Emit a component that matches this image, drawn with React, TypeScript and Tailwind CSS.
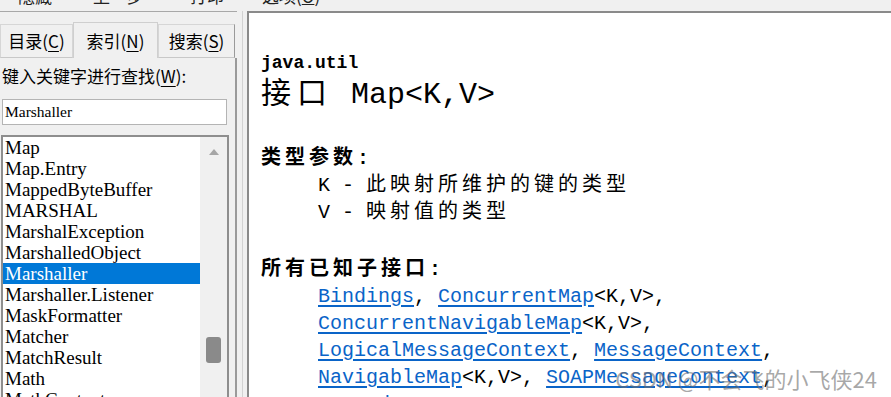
const items = [
  "Map",
  "Map.Entry",
  "MappedByteBuffer",
  "MARSHAL",
  "MarshalException",
  "MarshalledObject",
  "Marshaller",
  "Marshaller.Listener",
  "MaskFormatter",
  "Matcher",
  "MatchResult",
  "Math",
  "MathContext",
];

function Tab({ label, mn, active, className }: { label: string; mn: string; active?: boolean; className: string }) {
  return (
    <div
      className={
        "shrink-0 flex items-center justify-center bg-[#f0f0f0] border-t border-l border-r text-[17px] leading-[24px] " +
        (active ? "h-[36px] border-[#cfcfcf] " : "h-[34px] border-[#d6d6d6] border-b border-b-[#c8c8c8] ") +
        className
      }
    >
      {label}(<span className="underline underline-offset-[3px]">{mn}</span>)
    </div>
  );
}

function Link({ children }: { children: React.ReactNode }) {
  return <span className="text-[#0a64c8] underline underline-offset-[3px] decoration-[#0a64c8]">{children}</span>;
}

export default function App() {
  return (
    <div className="h-[397px] w-[891px] overflow-hidden bg-[#f0f0f0] flex flex-col font-['Noto_Sans_CJK_SC',sans-serif] text-black">
      {/* toolbar, cut off at top */}
      <div className="h-[11px] overflow-hidden flex text-[17px] leading-[17px] text-[#222]">
        <span className="ml-[18px] -mt-[13px]">隐藏</span>
        <span className="ml-[41px] -mt-[13px]">上一步</span>
        <span className="ml-[46px] -mt-[13px]">打印</span>
        <span className="ml-[38px] -mt-[13px]">
          选项(<span className="underline">O</span>)
        </span>
      </div>

      <div className="flex flex-1 min-h-0">
        {/* left pane */}
        <div className="w-[237px] flex flex-col border-t border-[#a8a8a8]">
          <div className="h-[46px] flex items-end">
            <Tab label="目录" mn="C" className="w-[73px]" />
            <Tab label="索引" mn="N" active className="w-[85px]" />
            <Tab label="搜索" mn="S" className="w-[77px] border-r-[#9a9a9a]" />
            <div className="flex-1 h-full" />
          </div>
          <div className="flex-1 flex flex-col border-r-2 border-[#9a9a9a] min-h-0">
            <div className="mt-[6px] ml-[2px] text-[17px] leading-[24px] whitespace-nowrap">
              键入关键字进行查找(<span className="underline underline-offset-[3px]">W</span>):
            </div>
            <div className="mt-[11px] ml-[2px] w-[225px] h-[26px] bg-white border border-[#b4b4b4] flex items-center pl-[2px] font-['Liberation_Serif',serif] text-[15.5px]">
              Marshaller
            </div>
            <div className="mt-[10px] ml-[1px] w-[228px] flex-1 border-2 border-b-0 border-[#8e8e8e] flex min-h-0">
              <div className="w-[197px] bg-white font-['Liberation_Serif',serif] text-[19px] leading-[21px]">
                {items.map((it) => (
                  <div
                    key={it}
                    className={
                      "h-[21px] pl-[2px] whitespace-nowrap " + (it === "Marshaller" ? "bg-[#0078d7] text-white" : "")
                    }
                  >
                    {it}
                  </div>
                ))}
              </div>
              <div className="flex-1 bg-[#f0f0f0] flex flex-col items-center pt-[12px]">
                <svg width="10" height="6" viewBox="0 0 10 6">
                  <polygon points="5,0 10,6 0,6" fill="#a6a6a6" />
                </svg>
                <div className="mt-[182px] w-[15px] h-[26px] rounded-[3px] bg-[#8a8a8a]" />
              </div>
            </div>
          </div>
        </div>

        {/* splitter */}
        <div className="w-[10px] flex">
          <div className="ml-[5px] w-px bg-[#d2d2d2]" />
        </div>

        {/* right pane */}
        <div className="relative flex-1 bg-white border-l-2 border-t-2 border-[#8a8a8a] pl-[12px] pt-[38px] overflow-hidden font-['Liberation_Mono','Noto_Sans_CJK_SC',monospace] whitespace-nowrap">
          <div className="text-[18px] font-bold leading-[24px]">java.util</div>
          <div className="text-[30px] leading-[40px]">
            <span className="tracking-[6px]">接口</span> Map&lt;K,V&gt;
          </div>

          <div className="mt-[30px] text-[20px] leading-[27px] font-bold">
            <span className="tracking-[4px]">类型参数</span>:
          </div>
          <div className="pl-[57px] text-[20px] leading-[27px]">
            K - <span className="tracking-[4px]">此映射所维护的键的类型</span>
          </div>
          <div className="pl-[57px] text-[20px] leading-[27px]">
            V - <span className="tracking-[4px]">映射值的类型</span>
          </div>

          <div className="mt-[30px] text-[20px] leading-[27px] font-bold">
            <span className="tracking-[4px]">所有已知子接口</span>:
          </div>
          <div className="pl-[57px] text-[20px] leading-[27px]">
            <div>
              <Link>Bindings</Link>, <Link>ConcurrentMap</Link>&lt;K,V&gt;,
            </div>
            <div>
              <Link>ConcurrentNavigableMap</Link>&lt;K,V&gt;,
            </div>
            <div>
              <Link>LogicalMessageContext</Link>, <Link>MessageContext</Link>,
            </div>
            <div>
              <Link>NavigableMap</Link>&lt;K,V&gt;, <Link>SOAPMessageContext</Link>,
            </div>
            <div>
              <Link>SortedMap</Link>&lt;K,V&gt;
            </div>
          </div>

          <div className="absolute right-[14px] bottom-[5px] font-['Noto_Sans_CJK_SC',sans-serif] text-[22px] leading-[28px] text-[rgba(110,110,110,0.6)]">
            CSDN @不会飞的小飞侠24
          </div>
        </div>
      </div>
    </div>
  );
}
